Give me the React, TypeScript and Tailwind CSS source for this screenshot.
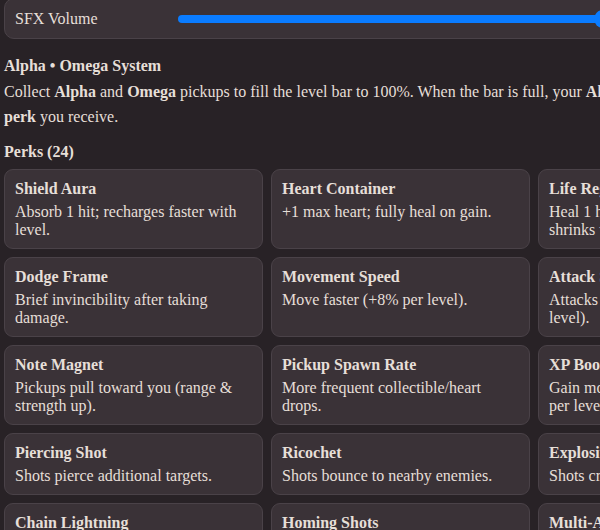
const perks = [
  { name: "Shield Aura", desc: "Absorb 1 hit; recharges faster with level." },
  { name: "Heart Container", desc: "+1 max heart; fully heal on gain." },
  { name: "Life Regen", desc: "Heal 1 heart over time; the interval shrinks with level." },
  { name: "Dodge Frame", desc: "Brief invincibility after taking damage." },
  { name: "Movement Speed", desc: "Move faster (+8% per level)." },
  { name: "Attack Speed", desc: "Attacks fire more often (+10% per level)." },
  { name: "Note Magnet", desc: "Pickups pull toward you (range & strength up)." },
  { name: "Pickup Spawn Rate", desc: "More frequent collectible/heart drops." },
  { name: "XP Boost", desc: "Gain more from each pickup (+10% per level)." },
  { name: "Piercing Shot", desc: "Shots pierce additional targets." },
  { name: "Ricochet", desc: "Shots bounce to nearby enemies." },
  { name: "Explosive Shots", desc: "Shots create small explosions." },
  { name: "Chain Lightning", desc: "Hits arc to nearby enemies." },
  { name: "Homing Shots", desc: "Shots curve toward targets." },
  { name: "Multi-Attack", desc: "Fire an extra projectile." },
  { name: "Critical Hit", desc: "Chance to deal double damage." },
  { name: "Damage Up", desc: "Shots deal more damage." },
  { name: "Range Up", desc: "Shots travel farther." },
  { name: "Freeze Touch", desc: "Hits briefly slow enemies." },
  { name: "Burn", desc: "Hits set enemies on fire." },
  { name: "Orbiting Notes", desc: "Notes circle you and damage enemies." },
  { name: "Second Wind", desc: "Revive once with 1 heart." },
  { name: "Lucky Drop", desc: "Rare pickups appear more often." },
  { name: "Combo Keeper", desc: "Combo lasts longer between hits." },
];

function VolumeRow() {
  return (
    <div className="-mt-[2px] flex h-[41px] items-center rounded-[10px] border border-[#4a4248] bg-[#3a3237] px-[10px]">
      <span className="w-[163px] text-[16px]">SFX Volume</span>
      <div className="relative flex h-[18px] w-[434px] items-center">
        <div className="h-[8px] w-full rounded-full bg-[#0a7cff]" />
        <div className="absolute right-0 top-0 h-[18px] w-[18px] rounded-full bg-[#0a7cff]" />
      </div>
    </div>
  );
}

export default function App() {
  return (
    <div className="min-h-[530px] w-[801px] bg-[#282226] px-[4px] font-[family-name:'Liberation_Serif','Times_New_Roman',serif] text-[16px] text-[#e6dfd8]">
      <VolumeRow />
      <h2 className="mt-[18px] font-bold leading-[18px]">Alpha • Omega System</h2>
      <p className="mt-[4px] leading-[25px]">
        Collect <b>Alpha</b> and <b>Omega</b> pickups to fill the level bar to 100%. When the bar is full, your{" "}
        <b>Alpha • Omega</b> level rises.
        <br />
        <b>perk</b> you receive.
      </p>
      <h3 className="mt-[14px] font-bold leading-[18px]">Perks ({perks.length})</h3>
      <div className="mt-[8px] grid grid-cols-3 gap-[8px] pb-4">
        {perks.map((perk) => (
          <div
            key={perk.name}
            className="rounded-[9px] border border-[#4a4248] bg-[#3a3237] px-[10px] pb-[9px] pt-[10px]"
          >
            <div className="font-bold leading-[18px]">{perk.name}</div>
            <div className="mt-[5px] leading-[18px]">{perk.desc}</div>
          </div>
        ))}
      </div>
    </div>
  );
}
